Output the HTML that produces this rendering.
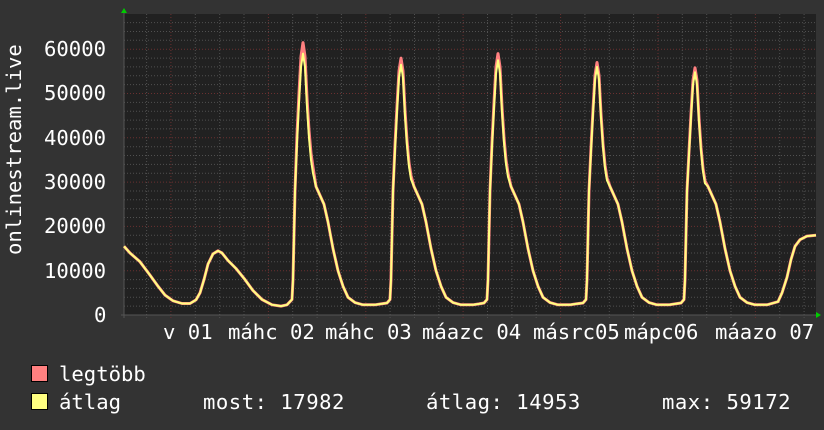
<!DOCTYPE html>
<html><head><meta charset="utf-8"><style>
body{margin:0;background:#333;width:824px;height:430px;overflow:hidden;position:relative;font-family:"DejaVu Sans Mono","Liberation Mono",monospace;color:#fff}
.t{position:absolute;font-size:20.6px;line-height:20px;white-space:pre}
.sq{position:absolute;width:15px;height:15px;border:1px solid #000}
</style></head><body>
<svg id="g" width="824" height="430" style="position:absolute;left:0;top:0"></svg>
<div class="t" style="left:44px;top:39px">60000</div>
<div class="t" style="left:44px;top:83px">50000</div>
<div class="t" style="left:44px;top:128px">40000</div>
<div class="t" style="left:44px;top:172px">30000</div>
<div class="t" style="left:44px;top:216px">20000</div>
<div class="t" style="left:44px;top:261px">10000</div>
<div class="t" style="left:94px;top:305px">0</div>
<div class="t" style="left:-76px;top:155px;transform:rotate(-90deg);width:180px;text-align:center">onlinestream.live</div>
<div class="t" style="left:163px;top:322px">v 01</div>
<div class="t" style="left:228px;top:322px">máhc 02</div>
<div class="t" style="left:325px;top:322px">máhc 03</div>
<div class="t" style="left:422px;top:322px">máazc 04</div>
<div class="t" style="left:533px;top:322px">másrc05</div>
<div class="t" style="left:624px;top:322px">mápc06</div>
<div class="t" style="left:715px;top:322px">máazo 07</div>
<div class="sq" style="left:31px;top:365px;background:#ff8080"></div>
<div class="sq" style="left:31px;top:393px;background:#ffff80"></div>
<div class="t" style="left:59px;top:364px">legtöbb</div>
<div class="t" style="left:59px;top:392px">átlag</div>
<div class="t" style="left:203px;top:392px;letter-spacing:0.5px">most: 17982</div>
<div class="t" style="left:426px;top:392px;letter-spacing:0.5px">átlag: 14953</div>
<div class="t" style="left:662px;top:392px;letter-spacing:0.5px">max: 59172</div>
<script>
var s='',X0=124,X1=816,Y0=14,YB=315;
s+='<rect x="124" y="14" width="692" height="301" fill="#212121"/>';
for(var v=2000;v<=68000;v+=2000){var y=YB-v*0.00443;if(y<Y0)break;var maj=v%10000==0;
s+='<line x1="124" x2="816" y1="'+y.toFixed(1)+'" y2="'+y.toFixed(1)+'" stroke="'+(maj?'#6a3030':'#505050')+'" stroke-dasharray="1,2"/>';}
for(var k=0;k<40;k++){var x=146.6+k*24.35;if(x>816)break;var maj=(k%4==1);
s+='<line y1="14" y2="318" x1="'+x.toFixed(1)+'" x2="'+x.toFixed(1)+'" stroke="'+(maj?'#6a3030':'#505050')+'" stroke-dasharray="1,2"/>';}
s+='<line x1="121" x2="820" y1="315" y2="315" stroke="#555"/><line x1="124" x2="124" y1="10" y2="318" stroke="#555"/>';
s+='<polygon points="121,13 124,8 127,13" fill="#0c0"/><polygon points="816,312 821,315 816,318" fill="#0c0"/>';
function pts(pk){var a=[[124,15500],[130,14000],[140,12000],[150,9000],[158,6500],[165,4500],[173,3200],[182,2600],[190,2600],[196,3400],[200,5000],[204,8000],[208,11500],[213,13800],[218,14500],[222,14000],[228,12300],[236,10500],[245,8000],[253,5500],[262,3500],[272,2300],[281,2000],[287,2300]];
var peaks=[303,401,498,597,695];
var tpl=[[-14,2.7],[-11,3.5],[-10,8],[-9,18],[-8,28],[-6,39],[-4,48],[-2,56],[0,0],[2,56],[4,47],[6,40],[8,35],[10,32],[13,29],[17,27],[21,25],[25,21],[30,15],[35,10],[40,6.5],[45,4],[52,2.8],[60,2.3],[72,2.3],[78,2.5]];
for(var i=0;i<5;i++){for(var j=0;j<tpl.length;j++){var d=tpl[j];if(i==0&&d[0]<-11)continue;if(i==4&&d[0]>75)continue;var v;if(d[0]==0)v=pk[i];else v=d[1]*1000*(d[1]>30?pk[i]/59000:1);a.push([peaks[i]+d[0],v]);}}
a.push([778,3000],[782,5000],[787,8500],[791,12500],[795,15500],[800,17000],[807,17800],[816,18000]);
return a.map(function(p){return p[0]+','+(YB-p[1]*0.00443).toFixed(1)}).join(' ');}
s+='<polyline points="'+pts([61500,58000,59000,57000,55800])+'" fill="none" stroke="#ff8080" stroke-width="3" stroke-linejoin="round"/>';
s+='<polyline points="'+pts([59000,56500,57500,56000,54800])+'" fill="none" stroke="#ffff80" stroke-width="2" stroke-linejoin="round"/>';
document.getElementById('g').innerHTML=s;
</script>
</body></html>
